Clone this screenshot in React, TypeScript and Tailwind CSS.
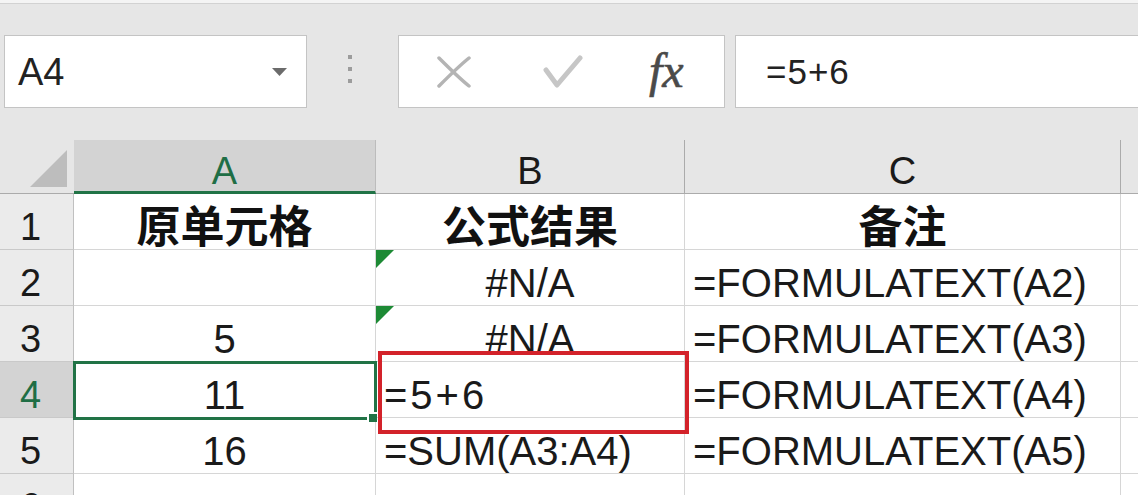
import React from "react";

const ErrTri = () => (
  <svg className="absolute left-0 top-0" width="18" height="18" viewBox="0 0 18 18">
    <polygon points="0,0 18,0 0,18" fill="#1d8a35" />
  </svg>
);

type Cell = { text?: string; align?: "left" | "center"; bold?: boolean; err?: boolean; wide?: boolean };

const rows: { n: string; sel?: boolean; cells: Cell[] }[] = [
  {
    n: "1",
    cells: [
      { text: "原单元格", align: "center", bold: true },
      { text: "公式结果", align: "center", bold: true },
      { text: "备注", align: "center", bold: true },
    ],
  },
  {
    n: "2",
    cells: [
      { text: "", align: "center" },
      { text: "#N/A", align: "center", err: true },
      { text: "=FORMULATEXT(A2)", align: "left" },
    ],
  },
  {
    n: "3",
    cells: [
      { text: "5", align: "center" },
      { text: "#N/A", align: "center", err: true },
      { text: "=FORMULATEXT(A3)", align: "left" },
    ],
  },
  {
    n: "4",
    sel: true,
    cells: [
      { text: "11", align: "center" },
      { text: "=5+6", align: "left", wide: true },
      { text: "=FORMULATEXT(A4)", align: "left" },
    ],
  },
  {
    n: "5",
    cells: [
      { text: "16", align: "center" },
      { text: "=SUM(A3:A4)", align: "left" },
      { text: "=FORMULATEXT(A5)", align: "left" },
    ],
  },
  { n: "6", cells: [{}, {}, {}] },
];

const widths = ["w-[302px]", "w-[309px]", "w-[436px]"];

export default function App() {
  return (
    <div className="relative w-[1138px] h-[495px] overflow-hidden bg-white font-['Liberation_Sans','Noto_Sans_CJK_SC',sans-serif] text-[#1a1a1a]">
      {/* toolbar */}
      <div className="h-[140px] bg-[#e6e6e6] flex flex-col">
        <div className="h-[4px] bg-[#f4f4f4] border-b border-[#d2d2d2]" />
        <div className="mt-[31px] flex items-start">
          <div className="ml-[4px] w-[303px] h-[73px] bg-white border border-[#c4c4c4] flex items-center justify-between pl-[13px] pr-[19px]">
            <span className="text-[38px] leading-none text-[#222]">A4</span>
            <svg width="15" height="8" viewBox="0 0 15 8">
              <polygon points="0,0 15,0 7.5,8" fill="#6b6b6b" />
            </svg>
          </div>
          <div className="ml-[41px] mt-[20px] flex flex-col gap-[8px]">
            <div className="w-[4px] h-[4px] bg-[#9c9c9c]" />
            <div className="w-[4px] h-[4px] bg-[#9c9c9c]" />
            <div className="w-[4px] h-[4px] bg-[#9c9c9c]" />
          </div>
          <div className="ml-[46px] w-[327px] h-[73px] bg-white border border-[#c4c4c4] flex items-center pl-[38px]">
            <svg width="34" height="32" viewBox="0 0 34 32">
              <path d="M2 2 C12 12 22 22 32 30" stroke="#b4b4b4" strokeWidth="3.5" fill="none" strokeLinecap="round" />
              <path d="M32 2 C22 10 12 20 2 30" stroke="#b4b4b4" strokeWidth="3.5" fill="none" strokeLinecap="round" />
            </svg>
            <svg className="ml-[72px]" width="40" height="34" viewBox="0 0 40 34">
              <path d="M3 15 L14 30 L37 3" stroke="#c6c6c6" strokeWidth="5" fill="none" strokeLinecap="round" strokeLinejoin="round" />
            </svg>
            <span className="ml-[66px] -mt-[2px] text-[48px] leading-none italic text-[#4a4a4a] font-['Liberation_Serif',serif] [-webkit-text-stroke:0.6px_#4a4a4a]">fx</span>
          </div>
          <div className="ml-[10px] flex-1 h-[73px] bg-white border border-[#c4c4c4] border-r-0 flex items-center pl-[30px]">
            <span className="text-[35px] leading-none text-[#222] tracking-[1px]">=5+6</span>
          </div>
        </div>
      </div>

      {/* column headers */}
      <div className="flex h-[54px]">
        <div className="w-[74px] h-full bg-[#e6e6e6] border-b border-[#ababab] relative">
          <svg className="absolute left-[30px] top-[10px]" width="38" height="38" viewBox="0 0 38 38">
            <polygon points="0,37 37,37 37,0" fill="#bdbdbd" />
          </svg>
        </div>
        <div className="w-[302px] h-full bg-[#d3d3d3] border-b-[3px] border-[#217346] border-r border-r-[#bcbcbc] flex items-end justify-center pb-[1px]">
          <span className="text-[38px] leading-none text-[#1f6e45]">A</span>
        </div>
        <div className="w-[309px] h-full bg-[#e6e6e6] border-b border-[#ababab] border-r border-r-[#ababab] flex items-end justify-center pb-[3px]">
          <span className="text-[38px] leading-none">B</span>
        </div>
        <div className="w-[436px] h-full bg-[#e6e6e6] border-b border-[#ababab] border-r border-r-[#ababab] flex items-end justify-center pb-[3px]">
          <span className="text-[38px] leading-none">C</span>
        </div>
        <div className="flex-1 h-full bg-[#e6e6e6] border-b border-[#ababab]" />
      </div>

      {/* body rows */}
      {rows.map((r) => (
        <div key={r.n} className="flex h-[56px]">
          <div
            className={
              "w-[74px] h-full border-b border-[#c9c9c9] border-r border-r-[#c0c0c0] flex items-end justify-center pr-[12px] pb-[3px] " +
              (r.sel ? "bg-[#d3d3d3]" : "bg-[#ebebeb]")
            }
          >
            <span className={"text-[38px] leading-none " + (r.sel ? "text-[#1f6e45]" : "text-[#1a1a1a]")}>{r.n}</span>
          </div>
          {r.cells.map((c, i) => (
            <div
              key={i}
              className={
                widths[i] +
                " relative h-full border-b border-r border-[#d6d6d6] flex items-end " +
                (c.align === "center" ? "justify-center " : "justify-start pl-[8px] ") +
                (c.bold ? "pb-[3px]" : "pb-[2px]")
              }
            >
              {c.err && <ErrTri />}
              {c.text ? (
                <span
                  className={
                    c.bold
                      ? "text-[44px] leading-none font-bold font-['Noto_Sans_CJK_SC',sans-serif] text-[#111]"
                      : "text-[40px] leading-none whitespace-nowrap" + (c.wide ? " tracking-[3px]" : "")
                  }
                >
                  {c.text}
                </span>
              ) : null}
            </div>
          ))}
          <div className="flex-1 h-full border-b border-[#d6d6d6]" />
        </div>
      ))}

      {/* selection of A4 */}
      <div className="absolute left-[73px] top-[361px] w-[304px] h-[59px] border-[3px] border-[#217346]" />
      <div className="absolute left-[367px] top-[412px] w-[10px] h-[10px] bg-[#217346] border-l-2 border-t-2 border-white" />

      {/* red annotation box */}
      <div className="absolute left-[378px] top-[351px] w-[311px] h-[83px] border-[4px] border-[#d3222a]" />
    </div>
  );
}
